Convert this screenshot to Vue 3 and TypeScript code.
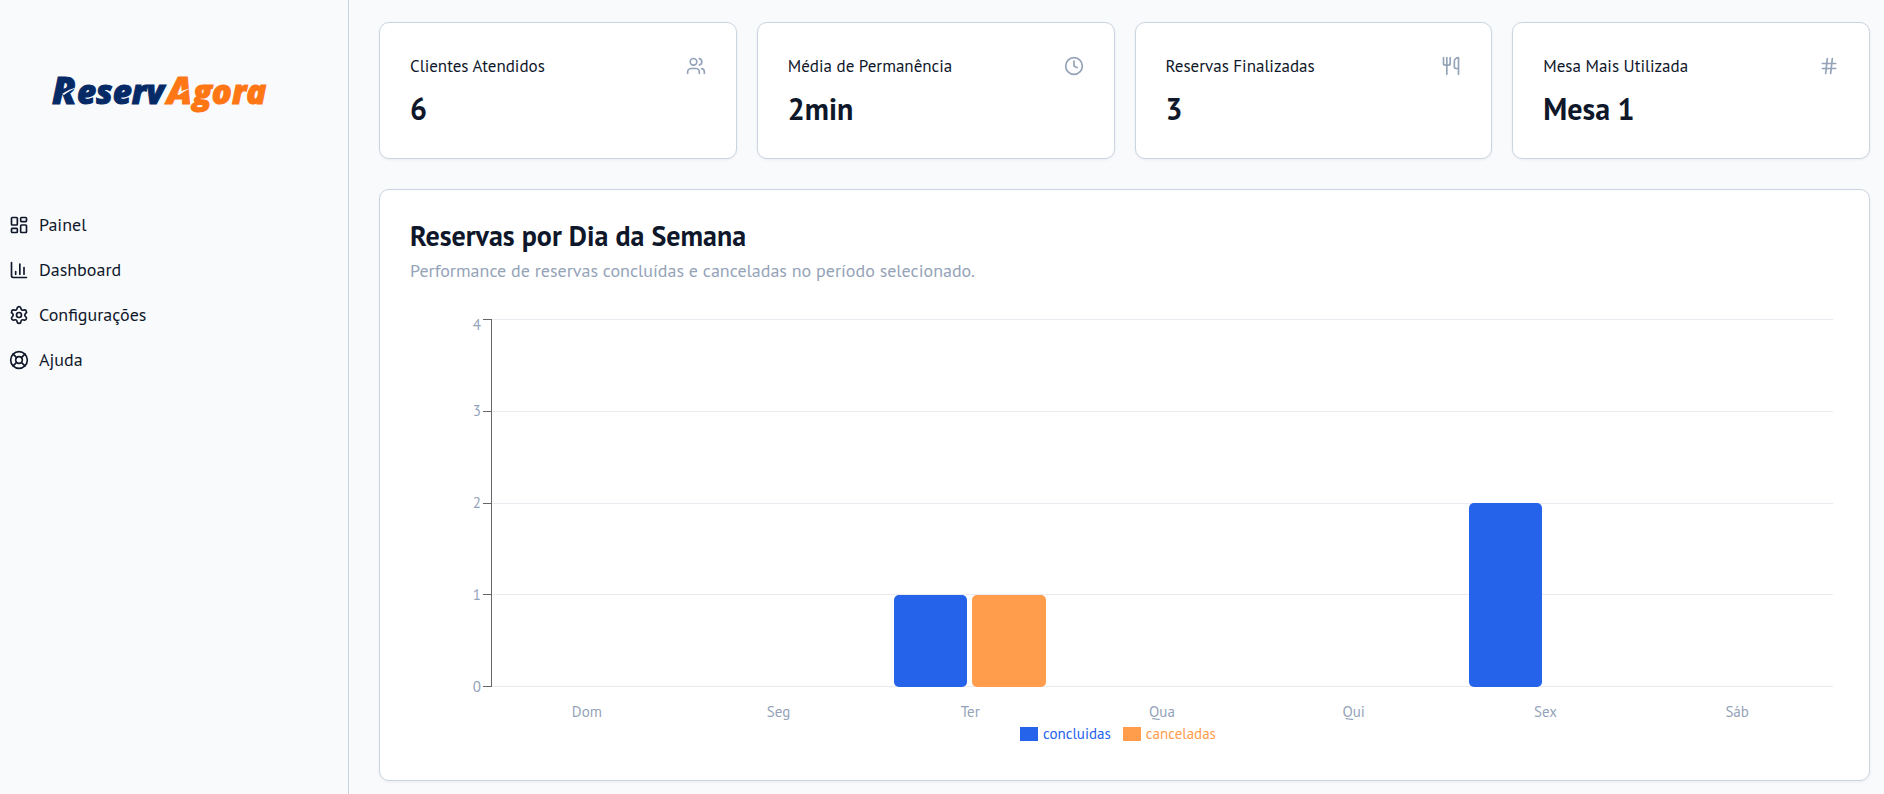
<script setup lang="ts">
interface Shape {
  paths: string[]
  circles?: number[][]
  rects?: number[][]
}

const icons: Record<string, Shape> = {
  painel: {
    paths: [],
    rects: [[3, 3, 7, 9], [14, 3, 7, 5], [14, 12, 7, 9], [3, 16, 7, 5]],
  },
  dashboard: { paths: ['M3 3v16a2 2 0 0 0 2 2h16', 'M18 17V9', 'M13 17V5', 'M8 17v-3'] },
  config: {
    paths: [
      'M9.671 4.136a2.34 2.34 0 0 1 4.659 0 2.34 2.34 0 0 0 3.319 1.915 2.34 2.34 0 0 1 2.33 4.033 2.34 2.34 0 0 0 0 3.831 2.34 2.34 0 0 1-2.33 4.033 2.34 2.34 0 0 0-3.319 1.915 2.34 2.34 0 0 1-4.659 0 2.34 2.34 0 0 0-3.32-1.915 2.34 2.34 0 0 1-2.33-4.033 2.34 2.34 0 0 0 0-3.831A2.34 2.34 0 0 1 6.35 6.051a2.34 2.34 0 0 0 3.319-1.915',
    ],
    circles: [[12, 12, 3]],
  },
  ajuda: {
    paths: ['m4.93 4.93 4.24 4.24', 'm14.83 9.17 4.24-4.24', 'm14.83 14.83 4.24 4.24', 'm9.17 14.83-4.24 4.24'],
    circles: [[12, 12, 10], [12, 12, 4]],
  },
  users: {
    paths: ['M16 21v-2a4 4 0 0 0-4-4H6a4 4 0 0 0-4 4v2', 'M22 21v-2a4 4 0 0 0-3-3.87', 'M16 3.13a4 4 0 0 1 0 7.75'],
    circles: [[9, 7, 4]],
  },
  clock: { paths: ['M12 6v6l4 2'], circles: [[12, 12, 10]] },
  utensils: {
    paths: ['M3 2v7c0 1.1.9 2 2 2h4a2 2 0 0 0 2-2V2', 'M7 2v20', 'M21 15V2a5 5 0 0 0-5 5v6c0 1.1.9 2 2 2h3Zm0 0v7'],
  },
  hash: { paths: ['M4 9h16', 'M4 15h16', 'M10 3 8 21', 'M16 3l-2 18'] },
}

const menu = [
  { label: 'Painel', icon: 'painel' },
  { label: 'Dashboard', icon: 'dashboard' },
  { label: 'Configurações', icon: 'config' },
  { label: 'Ajuda', icon: 'ajuda' },
]

const stats = [
  { label: 'Clientes Atendidos', value: '6', icon: 'users' },
  { label: 'Média de Permanência', value: '2min', icon: 'clock' },
  { label: 'Reservas Finalizadas', value: '3', icon: 'utensils' },
  { label: 'Mesa Mais Utilizada', value: 'Mesa 1', icon: 'hash' },
]

const max = 4
const ticks = [4, 3, 2, 1, 0]
const days = [
  { day: 'Dom', concluidas: 0, canceladas: 0 },
  { day: 'Seg', concluidas: 0, canceladas: 0 },
  { day: 'Ter', concluidas: 1, canceladas: 1 },
  { day: 'Qua', concluidas: 0, canceladas: 0 },
  { day: 'Qui', concluidas: 0, canceladas: 0 },
  { day: 'Sex', concluidas: 2, canceladas: 0 },
  { day: 'Sáb', concluidas: 0, canceladas: 0 },
]

const barHeight = (n: number) => ({ height: `${(n / max) * 100}%` })
</script>

<template>
  <div class="layout">
    <aside class="sidebar">
      <a class="brand" href="#" aria-label="ReservAgora">
        <svg class="logo" viewBox="0 0 216 44" aria-hidden="true">
          <g class="logo-navy">
            <text class="logo-cap" x="1" y="32">R</text>
            <text class="logo-low" x="26" y="32">eserv</text>
          </g>
          <g class="logo-orange">
            <text class="logo-cap" x="116" y="32">A</text>
            <text class="logo-low" x="142" y="32">gora</text>
          </g>
          <path class="logo-cut" d="M11 22 Q18 17 27 15 Q18 19 13 23Z" />
          <path class="logo-cut" d="M126 22 Q131 18 140 16 Q133 19 128 23Z" />
        </svg>
      </a>
      <nav class="menu">
        <a v-for="item in menu" :key="item.label" class="menu-item" href="#">
          <svg class="icon" viewBox="0 0 24 24" aria-hidden="true">
            <rect v-for="(r, i) in icons[item.icon].rects" :key="'r' + i" :x="r[0]" :y="r[1]" :width="r[2]" :height="r[3]" rx="1" />
            <circle v-for="(c, i) in icons[item.icon].circles" :key="'c' + i" :cx="c[0]" :cy="c[1]" :r="c[2]" />
            <path v-for="d in icons[item.icon].paths" :key="d" :d="d" />
          </svg>
          <span>{{ item.label }}</span>
        </a>
      </nav>
    </aside>

    <main class="content">
      <section class="stats">
        <article v-for="stat in stats" :key="stat.label" class="card">
          <header class="card-head">
            <h3 class="card-title">{{ stat.label }}</h3>
            <svg class="icon muted" viewBox="0 0 24 24" aria-hidden="true">
              <circle v-for="(c, i) in icons[stat.icon].circles" :key="'c' + i" :cx="c[0]" :cy="c[1]" :r="c[2]" />
              <path v-for="d in icons[stat.icon].paths" :key="d" :d="d" />
            </svg>
          </header>
          <p class="card-value">{{ stat.value }}</p>
        </article>
      </section>

      <section class="card panel">
        <h2 class="panel-title">Reservas por Dia da Semana</h2>
        <p class="panel-sub">Performance de reservas concluídas e canceladas no período selecionado.</p>

        <div class="chart">
          <div class="y-axis">
            <span v-for="t in ticks" :key="t" class="y-tick">{{ t }}</span>
          </div>
          <div class="plot">
            <div class="grid">
              <span v-for="t in max" :key="t" class="grid-row"></span>
            </div>
            <div class="bands">
              <div v-for="d in days" :key="d.day" class="band">
                <span class="bar blue" :style="barHeight(d.concluidas)"></span>
                <span class="bar orange" :style="barHeight(d.canceladas)"></span>
              </div>
            </div>
          </div>
          <div class="x-axis">
            <span v-for="d in days" :key="d.day">{{ d.day }}</span>
          </div>
        </div>

        <ul class="legend">
          <li class="key key-blue"><span class="swatch blue"></span>concluidas</li>
          <li class="key key-orange"><span class="swatch orange"></span>canceladas</li>
        </ul>
      </section>
    </main>
  </div>
</template>

<style>
body {
  margin: 0;
  background: #f8fafc;
}
</style>

<style scoped>
.layout {
  display: grid;
  grid-template-columns: 349px minmax(0, 1fr);
  min-height: 100vh;
  box-sizing: border-box;
  background: #f8fafc;
  color: #0f172a;
  font-family: "PT Sans", "Open Sans", "Noto Sans", sans-serif;
  font-size: 18px;
}

.sidebar {
  border-right: 1px solid #cbd5e1;
}

.brand {
  display: flex;
  align-items: center;
  justify-content: center;
  height: 188px;
  margin-right: 30px;
}

.logo {
  width: 216px;
  height: 44px;
  overflow: visible;
  font-family: "Open Sans", sans-serif;
  font-weight: 800;
  font-style: italic;
}

.logo-cap {
  font-size: 37px;
}

.logo-low {
  font-size: 33px;
}

.logo-navy {
  fill: #062a66;
  stroke: #062a66;
}

.logo-orange {
  fill: #ff7614;
  stroke: #ff7614;
}

.logo-cut {
  fill: #f8fafc;
}

.menu {
  display: flex;
  flex-direction: column;
  padding: 14px 9px;
}

.menu-item {
  display: flex;
  align-items: center;
  gap: 10px;
  height: 45px;
  line-height: 22px;
  color: inherit;
  text-decoration: none;
}

.icon {
  width: 20px;
  height: 20px;
  flex: none;
  fill: none;
  stroke: currentColor;
  stroke-width: 2;
  stroke-linecap: round;
  stroke-linejoin: round;
}

.muted {
  color: #94a3b8;
}

.content {
  display: flex;
  flex-direction: column;
  gap: 30px;
  padding: 22px 14px 12px 30px;
}

.stats {
  display: grid;
  grid-template-columns: repeat(4, minmax(0, 1fr));
  gap: 20px;
}

.card {
  padding: 30px;
  border: 1px solid #cbd5e1;
  border-radius: 10px;
  background: #fff;
  box-shadow: 0 1px 3px rgba(15, 23, 42, 0.06);
}

.card-head {
  display: flex;
  align-items: center;
  justify-content: space-between;
  height: 26px;
}

.card-title {
  margin: 0;
  font-size: 17px;
  line-height: 22px;
  font-weight: 400;
}

.card-value {
  margin: 10px 0 0;
  font-size: 30px;
  line-height: 39px;
  font-weight: 700;
}

.panel-title {
  margin: 0;
  font-size: 28px;
  line-height: 32px;
  font-weight: 700;
}

.panel-sub {
  margin: 7px 0 0;
  line-height: 24px;
  color: #94a3b8;
}

.chart {
  display: grid;
  grid-template-columns: 81px minmax(0, 1fr);
  grid-template-rows: 368px 40px;
  padding: 36px 6px 0 0;
  color: #94a3b8;
  font-size: 15px;
}

.y-axis {
  display: flex;
  flex-direction: column;
  justify-content: space-between;
}

.y-tick {
  display: flex;
  align-items: center;
  justify-content: flex-end;
  gap: 2px;
  height: 1px;
  line-height: 20px;
}

.y-tick::after {
  content: "";
  width: 8px;
  height: 1px;
  background: #666;
}

/* The top label hangs below its tick so it stays inside the chart area. */
.y-tick:first-child {
  align-items: flex-start;
  line-height: 12px;
}

.plot {
  display: grid;
  border-left: 1px solid #666;
}

.grid,
.bands {
  grid-area: 1 / 1;
}

.grid {
  display: grid;
  grid-template-rows: repeat(4, 1fr);
  border-bottom: 1px solid #e9ebf0;
}

.grid-row {
  border-top: 1px solid #e9ebf0;
}

.bands {
  display: grid;
  grid-template-columns: repeat(7, 1fr);
}

.band {
  display: flex;
  align-items: flex-end;
  gap: 5px;
  padding: 0 11% 0 10%;
}

.bar {
  flex: 1;
  border-radius: 5px;
}

.blue {
  background: #2563eb;
}

.orange {
  background: #ff9d4d;
}

.x-axis {
  grid-column: 2;
  display: grid;
  grid-template-columns: repeat(7, 1fr);
  padding-top: 15px;
  line-height: 20px;
  text-align: center;
}

.legend {
  display: flex;
  justify-content: center;
  gap: 12px;
  margin: -4px 0 0;
  padding: 0 13px 5px 0;
  list-style: none;
  font-size: 15px;
  line-height: 22px;
}

.key {
  display: flex;
  align-items: center;
  gap: 5px;
}

.key-blue {
  color: #2563eb;
}

.key-orange {
  color: #ff9d4d;
}

.swatch {
  width: 18px;
  height: 14px;
}
</style>
